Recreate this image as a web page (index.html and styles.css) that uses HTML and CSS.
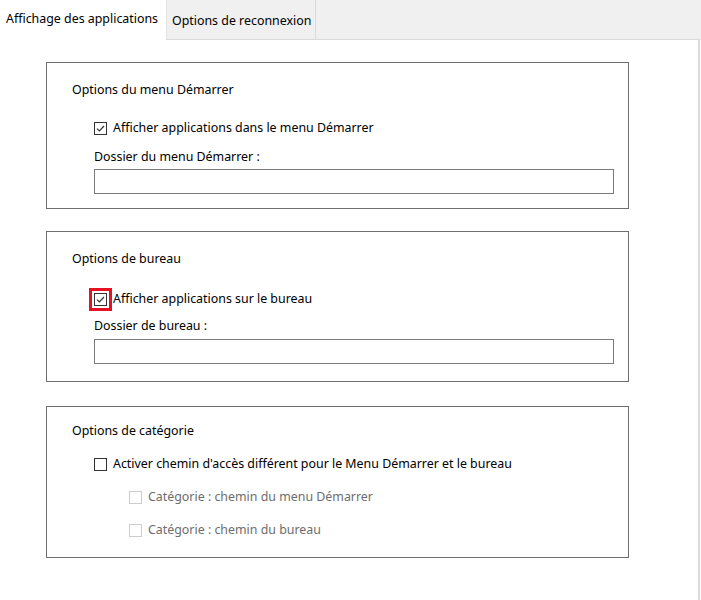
FILE: index.html
```html
<!DOCTYPE html>
<html lang="fr">
<head>
  <meta charset="UTF-8">
  <title>Affichage des applications</title>
  <link rel="stylesheet" href="styles.css">
</head>
<body>

  <div class="tabs">
    <div class="tab active">Affichage des applications</div>
    <div class="tab">Options de reconnexion</div>
    <div class="tab-fill"></div>
  </div>

  <div class="panel">

    <div class="group group-start">
      <div class="title">Options du menu Démarrer</div>
      <label class="check row-check">
        <span class="box checked">
          <svg viewBox="0 0 11 11"><path d="M2 5.6 L4.4 8 L9 3"/></svg>
        </span>
        Afficher applications dans le menu Démarrer
      </label>
      <div class="field-label">Dossier du menu Démarrer :</div>
      <input class="field" type="text">
    </div>

    <div class="group group-desk">
      <div class="title">Options de bureau</div>
      <label class="check row-check">
        <span class="box checked focused">
          <svg viewBox="0 0 11 11"><path d="M2 5.6 L4.4 8 L9 3"/></svg>
        </span>
        Afficher applications sur le bureau
      </label>
      <div class="field-label">Dossier de bureau :</div>
      <input class="field" type="text">
    </div>

    <div class="group group-cat">
      <div class="title">Options de catégorie</div>
      <label class="check row-check">
        <span class="box"></span>
        Activer chemin d'accès différent pour le Menu Démarrer et le bureau
      </label>
      <label class="check sub disabled">
        <span class="box"></span>
        Catégorie : chemin du menu Démarrer
      </label>
      <label class="check sub disabled">
        <span class="box"></span>
        Catégorie : chemin du bureau
      </label>
    </div>

  </div>

</body>
</html>
```

FILE: styles.css
```css
body {
  margin: 0;
  font-family: "Noto Sans", "Open Sans", sans-serif;
  font-size: 12.4px;
  color: #000;
  background: #fff;
  width: 701px;
  height: 600px;
  overflow: hidden;
}

/* tab strip */
.tabs {
  display: flex;
  height: 40px;
  background: #f0f0f0;
}
.tab {
  box-sizing: border-box;
  display: flex;
  align-items: center;
  height: 40px;
  padding: 2px 4px 0 5px;
  border-left: 1px solid #e3e3e3;
  border-right: 1px solid #dadada;
  border-bottom: 1px solid #dadada;
  white-space: nowrap;
}
.tab.active {
  width: 166px;
  padding: 0 0 4px 6px;
  background: #fff;
  border: none;
}
.tab-fill {
  flex: 1;
  border-bottom: 1px solid #dadada;
  margin-right: 1px;
}

/* page body */
.panel {
  box-sizing: border-box;
  width: 700px;
  height: 560px;
  padding: 22px 0 0 46px;
  border-right: 2px solid #dadada;
}

.group {
  box-sizing: border-box;
  width: 583px;
  border: 1px solid #6e6e6e;
  padding-left: 25px;
  display: flex;
  flex-direction: column;
}
.group-start { padding-top: 19px; padding-bottom: 14px; }
.group-desk { margin-top: 22px; padding-top: 19px; padding-bottom: 17px; }
.group-cat { margin-top: 24px; padding-top: 16px; padding-bottom: 19px; }

.title {
  height: 16px;
  line-height: 16px;
}

.check {
  display: flex;
  align-items: center;
  height: 16px;
  line-height: 16px;
  padding-left: 22px;
  gap: 6px;
  white-space: nowrap;
}
.group-start .row-check { margin-top: 22px; }
.group-desk .row-check { margin-top: 24px; }
.group-cat .row-check { margin-top: 17px; }

.check.sub {
  margin-top: 17px;
  padding-left: 57px;
}
.disabled { color: #6d6d6d; }

.box {
  box-sizing: border-box;
  width: 13px;
  height: 13px;
  border: 1px solid #333;
  background: #fff;
  flex: none;
}
.box svg {
  display: block;
  width: 11px;
  height: 11px;
  fill: none;
  stroke: #333;
  stroke-width: 1.2;
}
.disabled .box { border-color: #cccccc; }
.box.focused {
  outline: 3px solid #e81123;
  outline-offset: 2px;
}

.field-label {
  height: 16px;
  line-height: 16px;
  padding-left: 22px;
}
.group-start .field-label { margin-top: 13px; }
.group-desk .field-label { margin-top: 11px; }

.field {
  box-sizing: border-box;
  width: 520px;
  height: 25px;
  margin: 4px 0 0 22px;
  border: 1px solid #7a7a7a;
  border-radius: 0;
  padding: 0 4px;
  font: inherit;
}
.group-desk .field { margin-top: 5px; }
```
